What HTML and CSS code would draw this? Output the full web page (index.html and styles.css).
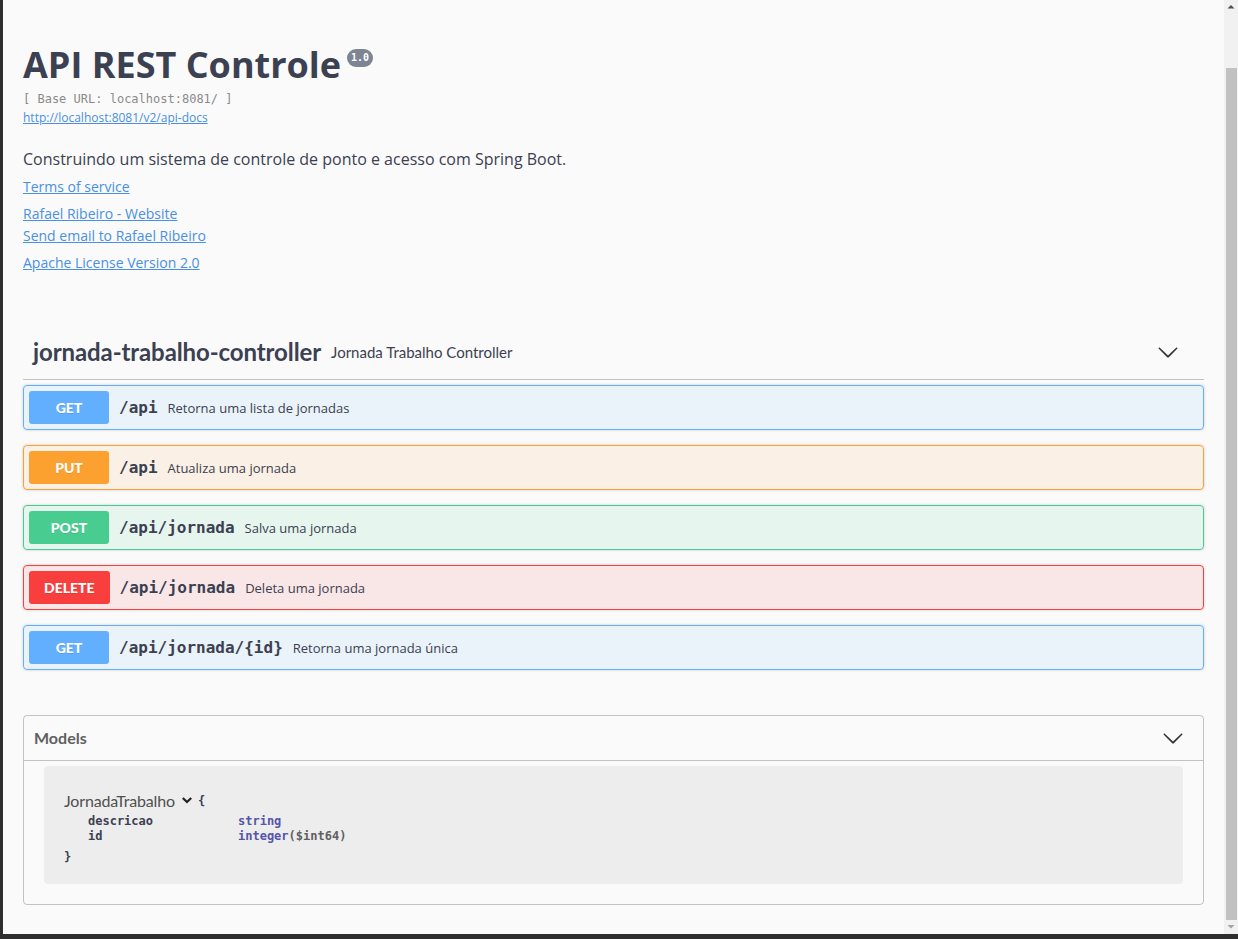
FILE: index.html
```html
<!DOCTYPE html>
<html lang="pt">
<head>
<meta charset="utf-8">
<title>Swagger UI</title>
<link rel="stylesheet" href="styles.css">
</head>
<body>
<div class="screen">
  <div class="frame-left"></div>
  <main class="viewport">
    <div class="wrapper">
      <section class="info">
        <h2 class="title">API REST Controle<span class="version">1.0</span></h2>
        <pre class="base-url">[ Base URL: localhost:8081/ ]</pre>
        <div class="spec-link"><a href="#">http://localhost:8081/v2/api-docs</a></div>
        <p class="description">Construindo um sistema de controle de ponto e acesso com Spring Boot.</p>
        <div class="info-group"><a href="#">Terms of service</a></div>
        <div class="info-group">
          <div><a href="#">Rafael Ribeiro - Website</a></div>
          <div><a href="#">Send email to Rafael Ribeiro</a></div>
        </div>
        <div class="info-group"><a href="#">Apache License Version 2.0</a></div>
      </section>

      <section class="tag-section">
        <h4 class="opblock-tag">
          <span class="tag-name">jornada-trabalho-controller</span>
          <small class="tag-desc">Jornada Trabalho Controller</small>
          <svg class="tag-arrow" width="22" height="22" viewBox="0 0 20 20"><path d="M17.418 6.109c.272-.268.709-.268.979 0s.271.701 0 .969l-7.908 7.83c-.27.268-.707.268-.979 0l-7.908-7.830c-.27-.268-.27-.701 0-.969.271-.268.709-.268.979 0L10 13.25l7.418-7.141z"/></svg>
        </h4>

        <div class="opblock opblock-get">
          <span class="method">GET</span>
          <span class="path">/api</span>
          <span class="summary">Retorna uma lista de jornadas</span>
        </div>
        <div class="opblock opblock-put">
          <span class="method">PUT</span>
          <span class="path">/api</span>
          <span class="summary">Atualiza uma jornada</span>
        </div>
        <div class="opblock opblock-post">
          <span class="method">POST</span>
          <span class="path">/api/jornada</span>
          <span class="summary">Salva uma jornada</span>
        </div>
        <div class="opblock opblock-delete">
          <span class="method">DELETE</span>
          <span class="path">/api/jornada</span>
          <span class="summary">Deleta uma jornada</span>
        </div>
        <div class="opblock opblock-get">
          <span class="method">GET</span>
          <span class="path">/api/jornada/{id}</span>
          <span class="summary">Retorna uma jornada única</span>
        </div>
      </section>

      <section class="models">
        <h4 class="models-head">
          <span>Models</span>
          <svg class="models-arrow" width="22" height="22" viewBox="0 0 20 20"><path d="M17.418 6.109c.272-.268.709-.268.979 0s.271.701 0 .969l-7.908 7.83c-.27.268-.707.268-.979 0l-7.908-7.830c-.27-.268-.27-.701 0-.969.271-.268.709-.268.979 0L10 13.25l7.418-7.141z"/></svg>
        </h4>
        <div class="model-container">
          <div class="model-title-row">
            <span class="model-title">JornadaTrabalho</span>
            <svg class="model-toggle" width="12" height="12" viewBox="0 0 12 12"><polyline points="1.8,4 6,8 10.2,4"/></svg>
            <span class="brace">{</span>
          </div>
          <div class="props">
            <span class="prop-name">descricao</span><span class="prop-type">string</span>
            <span class="prop-name">id</span><span class="prop-type">integer<span class="prop-format">($int64)</span></span>
          </div>
          <div class="brace close">}</div>
        </div>
      </section>
    </div>
  </main>
  <div class="scrollbar">
    <svg class="sb-arrow" width="14" height="14" viewBox="0 0 14 14"><polygon class="up" points="3.5,8.5 7,5 10.5,8.5"/></svg>
    <div class="sb-track"><div class="sb-thumb"></div></div>
    <svg class="sb-arrow" width="14" height="14" viewBox="0 0 14 14"><polygon class="down" points="3.5,5 10.5,5 7,8.5"/></svg>
  </div>
</div>
</body>
</html>
```

FILE: styles.css
```css
* { box-sizing: border-box; }

html, body {
  margin: 0;
  padding: 0;
}

body {
  width: 1238px;
  height: 939px;
  overflow: hidden;
  background: #2e2e2e;
  font-family: "Open Sans", sans-serif;
  color: #3b4151;
}

.screen {
  display: flex;
  height: 934px;
  background: #fafafa;
}

.frame-left {
  flex: none;
  width: 3px;
  background: #2e2e2e;
}

.viewport {
  flex: 1;
  min-width: 0;
  padding: 0 20px;
  overflow: hidden;
}

.wrapper {
  display: flex;
  flex-direction: column;
}

/* ---------- info ---------- */
.info {
  display: flex;
  flex-direction: column;
  align-items: flex-start;
  padding-top: 40px;
  margin-bottom: 51px;
}

.title {
  margin: 0;
  font-family: "Open Sans", sans-serif;
  font-weight: 700;
  font-size: 36px;
  line-height: 49px;
  color: #3b4151;
}

.version {
  display: inline-block;
  vertical-align: top;
  margin: 9px 0 0 6px;
  padding: 0 4px;
  height: 18px;
  line-height: 18px;
  border-radius: 57px;
  background: #7d8492;
  color: #fff;
  font-family: "DejaVu Sans Mono", monospace;
  font-size: 10px;
  font-weight: 700;
}

.base-url {
  margin: 2px 0 0;
  font-family: "DejaVu Sans Mono", monospace;
  font-size: 12px;
  line-height: 16px;
  color: #8a8a8a;
}

a {
  color: #4990e2;
  text-decoration: underline;
}

.spec-link {
  margin-top: 2px;
  font-size: 12px;
  line-height: 18px;
}

.description {
  margin: 21px 0 1px;
  font-size: 16px;
  line-height: 22px;
  color: #3b4151;
}

.info-group {
  margin-top: 5px;
  font-size: 14px;
  line-height: 22px;
}

/* ---------- operations ---------- */
.opblock-tag {
  display: flex;
  align-items: center;
  margin: 0 0 5px;
  padding: 10px 20px 10px 10px;
  border-bottom: 1px solid rgba(59, 65, 81, 0.3);
  line-height: 34px;
  color: #3b4151;
}

.tag-name {
  font-family: "Lato", sans-serif;
  font-size: 24px;
  font-weight: 700;
  letter-spacing: -0.1px;
}

.tag-desc {
  flex: 1;
  padding: 0 10px;
  font-family: "Lato", sans-serif;
  font-size: 15px;
  font-weight: 400;
}

.tag-arrow {
  margin-right: 5px;
  fill: #333;
}

.opblock {
  display: flex;
  align-items: center;
  margin: 0 0 15px;
  padding: 5px;
  border: 1px solid;
  border-radius: 4px;
  box-shadow: 0 0 3px rgba(0, 0, 0, 0.19);
}

.method {
  min-width: 80px;
  padding: 6px 15px;
  border-radius: 3px;
  font-family: "Lato", sans-serif;
  font-size: 14px;
  font-weight: 900;
  line-height: 21px;
  text-align: center;
  color: #fff;
  text-shadow: 0 1px 0 rgba(0, 0, 0, 0.1);
}

.path {
  padding: 0 10px;
  font-family: "DejaVu Sans Mono", monospace;
  font-size: 16px;
  font-weight: 700;
  color: #3b4151;
}

.summary {
  flex: 1;
  font-family: "Open Sans", sans-serif;
  font-size: 13px;
  color: #3b4151;
}

.opblock-get { border-color: #61affe; background: rgba(97, 175, 254, 0.1); }
.opblock-get .method { background: #61affe; }
.opblock-put { border-color: #fca130; background: rgba(252, 161, 48, 0.1); }
.opblock-put .method { background: #fca130; }
.opblock-post { border-color: #49cc90; background: rgba(73, 204, 144, 0.1); }
.opblock-post .method { background: #49cc90; }
.opblock-delete { border-color: #f93e3e; background: rgba(249, 62, 62, 0.1); }
.opblock-delete .method { background: #f93e3e; }

/* ---------- models ---------- */
.models {
  margin-top: 30px;
  border: 1px solid rgba(59, 65, 81, 0.3);
  border-radius: 4px;
}

.models-head {
  display: flex;
  align-items: center;
  justify-content: space-between;
  margin: 0 0 5px;
  padding: 10px 19px 10px 10px;
  border-bottom: 1px solid rgba(59, 65, 81, 0.3);
  font-family: "Lato", sans-serif;
  font-size: 16px;
  font-weight: 700;
  line-height: 24px;
  color: #606060;
}

.models-arrow {
  fill: #333;
}

.model-container {
  margin: 0 20px 20px;
  padding: 23px 20px 19px;
  border-radius: 4px;
  background: rgba(0, 0, 0, 0.05);
}

.model-title-row {
  display: flex;
  align-items: center;
  height: 22px;
  margin-bottom: 3px;
}

.model-title {
  font-family: "Lato", sans-serif;
  font-size: 16px;
  letter-spacing: -0.15px;
  color: #505050;
}

.model-toggle {
  margin: 0 5px 0 6px;
  fill: none;
  stroke: #222;
  stroke-width: 2.2;
}

.brace {
  font-family: "DejaVu Sans Mono", monospace;
  font-size: 12px;
  font-weight: 700;
  color: #3b4151;
}

.model-title-row .brace {
  position: relative;
  top: 1px;
}

.props {
  display: grid;
  grid-template-columns: 150px auto;
  padding-left: 24px;
  font-family: "DejaVu Sans Mono", monospace;
  font-size: 12px;
  font-weight: 700;
  line-height: 15px;
}

.prop-name { color: #3b4151; }
.prop-type { color: #55a; }
.prop-format { color: #606060; }

.brace.close {
  margin-top: 5px;
  line-height: 16px;
}

/* ---------- scrollbar ---------- */
.scrollbar {
  flex: none;
  width: 14px;
  display: flex;
  flex-direction: column;
  background: #f1f1f1;
}

.sb-arrow { flex: none; display: block; }
.sb-arrow .up { fill: #505050; }
.sb-arrow .down { fill: #a3a3a3; }

.sb-track {
  flex: 1;
  display: flex;
  flex-direction: column;
  padding: 54px 1px 0 2px;
}

.sb-thumb {
  flex: 1;
  background: #c1c1c1;
}
```
